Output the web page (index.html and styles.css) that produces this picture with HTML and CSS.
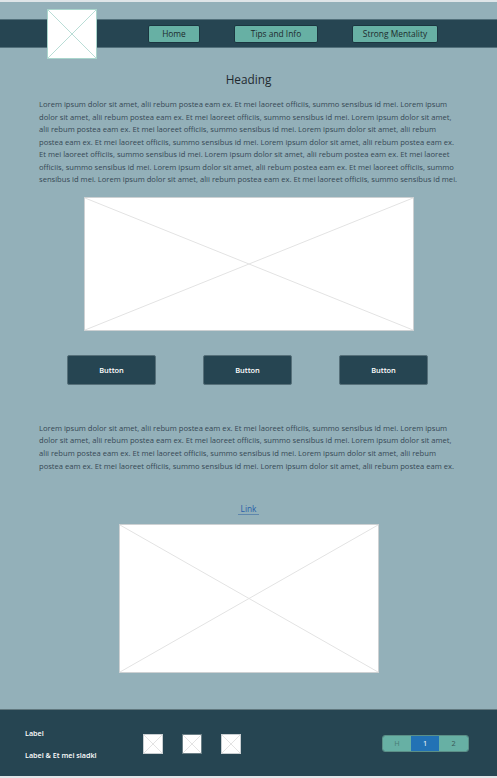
FILE: index.html
```html
<!DOCTYPE html>
<html lang="en">
<head>
<meta charset="utf-8">
<title>Strong Mentality</title>
<link rel="stylesheet" href="styles.css">
</head>
<body>
<div class="page">
  <header class="topbar">
    <div class="bar">
      <div class="logo">
        <svg class="ph-svg" viewBox="0 0 100 100" preserveAspectRatio="none"><line x1="0" y1="0" x2="100" y2="100"/><line x1="100" y1="0" x2="0" y2="100"/></svg>
      </div>
      <nav class="nav">
        <a class="nav-btn nav-home" href="#">Home</a>
        <a class="nav-btn nav-tips" href="#">Tips and Info</a>
        <a class="nav-btn nav-strong" href="#">Strong Mentality</a>
      </nav>
    </div>
  </header>

  <main class="content">
    <h1 class="heading">Heading</h1>
    <p class="text">Lorem ipsum dolor sit amet, alii rebum postea eam ex. Et mei laoreet officiis, summo sensibus id mei. Lorem ipsum dolor sit amet, alii rebum postea eam ex. Et mei laoreet officiis, summo sensibus id mei. Lorem ipsum dolor sit amet, alii rebum postea eam ex. Et mei laoreet officiis, summo sensibus id mei. Lorem ipsum dolor sit amet, alii rebum postea eam ex. Et mei laoreet officiis, summo sensibus id mei. Lorem ipsum dolor sit amet, alii rebum postea eam ex. Et mei laoreet officiis, summo sensibus id mei. Lorem ipsum dolor sit amet, alii rebum postea eam ex. Et mei laoreet officiis, summo sensibus id mei. Lorem ipsum dolor sit amet, alii rebum postea eam ex. Et mei laoreet officiis, summo sensibus id mei. Lorem ipsum dolor sit amet, alii rebum postea eam ex. Et mei laoreet officiis, summo sensibus id mei.</p>

    <div class="placeholder hero">
      <svg class="ph-svg" viewBox="0 0 100 100" preserveAspectRatio="none"><line x1="0" y1="0" x2="100" y2="100"/><line x1="100" y1="0" x2="0" y2="100"/></svg>
    </div>

    <div class="buttons">
      <button class="btn" type="button">Button</button>
      <button class="btn" type="button">Button</button>
      <button class="btn" type="button">Button</button>
    </div>

    <p class="text text-second">Lorem ipsum dolor sit amet, alii rebum postea eam ex. Et mei laoreet officiis, summo sensibus id mei. Lorem ipsum dolor sit amet, alii rebum postea eam ex. Et mei laoreet officiis, summo sensibus id mei. Lorem ipsum dolor sit amet, alii rebum postea eam ex. Et mei laoreet officiis, summo sensibus id mei. Lorem ipsum dolor sit amet, alii rebum postea eam ex. Et mei laoreet officiis, summo sensibus id mei. Lorem ipsum dolor sit amet, alii rebum postea eam ex.</p>

    <div class="link-row"><a class="link" href="#">Link</a></div>

    <div class="placeholder photo">
      <svg class="ph-svg" viewBox="0 0 100 100" preserveAspectRatio="none"><line x1="0" y1="0" x2="100" y2="100"/><line x1="100" y1="0" x2="0" y2="100"/></svg>
    </div>
  </main>

  <footer class="footer">
    <div class="labels">
      <span class="label">Label</span>
      <span class="label">Label &amp; Et mei sladkl</span>
    </div>
    <div class="thumbs">
      <div class="thumb"><svg class="ph-svg" viewBox="0 0 100 100" preserveAspectRatio="none"><line x1="0" y1="0" x2="100" y2="100"/><line x1="100" y1="0" x2="0" y2="100"/></svg></div>
      <div class="thumb thumb-dark"><svg class="ph-svg" viewBox="0 0 100 100" preserveAspectRatio="none"><line x1="0" y1="0" x2="100" y2="100"/><line x1="100" y1="0" x2="0" y2="100"/></svg></div>
      <div class="thumb"><svg class="ph-svg" viewBox="0 0 100 100" preserveAspectRatio="none"><line x1="0" y1="0" x2="100" y2="100"/><line x1="100" y1="0" x2="0" y2="100"/></svg></div>
    </div>
    <div class="pager">
      <span class="page-item page-h">H</span>
      <span class="page-item page-active">1</span>
      <span class="page-item page-2">2</span>
    </div>
  </footer>
</div>
</body>
</html>
```

FILE: styles.css
```css
* { box-sizing: border-box; }

html, body {
  margin: 0;
  padding: 0;
  background: #93b0b9;
}

body {
  font-family: "Open Sans", "Noto Sans", "DejaVu Sans", sans-serif;
}

.page {
  width: 497px;
  height: 778px;
  background: #93b0b9;
  border-top: 2px solid #dfe5e8;
  border-bottom: 2px solid #dfe5e8;
  display: flex;
  flex-direction: column;
  overflow: hidden;
}

/* header */
.topbar {
  padding-top: 17px;
}

.bar {
  height: 29px;
  background: #264552;
  border-top: 1px solid #52707b;
  border-bottom: 1px solid #52707b;
  display: flex;
  align-items: center;
}

.logo {
  width: 50px;
  height: 50px;
  flex: none;
  margin-left: 47px;
  background: #ffffff;
  border: 1px solid #a9d5cc;
}

.logo .ph-svg line { stroke: #b9ddd6; }

.nav {
  display: flex;
  align-items: center;
  gap: 34px;
  margin-left: 51px;
}

.nav-btn {
  display: flex;
  align-items: center;
  justify-content: center;
  height: 18px;
  background: #67b0a4;
  border: 1px solid #1b3540;
  border-radius: 2px;
  color: #1d2a2d;
  font-size: 8.4px;
  text-decoration: none;
}

.nav-home { width: 52px; }
.nav-tips { width: 84px; }
.nav-strong { width: 86px; }

/* placeholders */
.ph-svg {
  display: block;
  width: 100%;
  height: 100%;
}

.ph-svg line {
  stroke: #e3e3e3;
  stroke-width: 1;
  vector-effect: non-scaling-stroke;
}

.placeholder {
  background: #ffffff;
  border: 1px solid #cdd1d3;
  align-self: center;
}

.hero {
  width: 330px;
  height: 134px;
  margin-top: 11px;
}

.photo {
  width: 260px;
  height: 149px;
  margin-top: 9px;
}

/* content */
.content {
  flex: 1;
  display: flex;
  flex-direction: column;
}

.heading {
  margin: 23px 0 11px;
  text-align: center;
  font-size: 11.8px;
  line-height: 16px;
  font-weight: 400;
  color: #1f2a30;
}

.text {
  margin: 0;
  padding: 0 38px 0 39px;
  font-size: 7.62px;
  line-height: 12.5px;
  color: #364855;
}

.text-second {
  margin-top: 37px;
  line-height: 12.7px;
}

.buttons {
  display: flex;
  justify-content: center;
  gap: 47px;
  margin-top: 24px;
  padding-right: 2px;
}

.btn {
  width: 89px;
  height: 30px;
  background: #264552;
  border: 1px solid #56707a;
  border-radius: 2px;
  color: #ffffff;
  font-family: "Open Sans", "Noto Sans", sans-serif;
  font-size: 7.4px;
  font-weight: 600;
  padding: 0;
}

.link-row {
  margin-top: 31px;
  display: flex;
  justify-content: center;
  height: 12px;
}

.link {
  color: #2a5fa8;
  font-size: 8.3px;
  line-height: 11px;
  text-decoration: none;
  padding: 0 3px;
  border-bottom: 1px solid #5f87ac;
}

/* footer */
.footer {
  height: 67px;
  flex: none;
  background: #264552;
  border-top: 1px solid #61787f;
  display: flex;
  align-items: center;
  padding: 0 28px 0 25px;
}

.labels {
  display: flex;
  flex-direction: column;
  gap: 12px;
  padding-top: 2px;
  width: 74px;
}

.label {
  color: #ffffff;
  font-size: 7.2px;
  font-weight: 600;
  line-height: 10px;
  white-space: nowrap;
}

.thumbs {
  display: flex;
  gap: 19px;
  margin-left: 44px;
  padding-top: 1px;
}

.thumb {
  width: 20px;
  height: 20px;
  background: #ffffff;
  border: 1px solid #c9cfd2;
}

.thumb-dark { border-color: #6b7f86; }

.pager {
  margin-left: auto;
  display: flex;
  height: 17px;
  border: 1px solid #5b8f87;
  border-radius: 3px;
  overflow: hidden;
}

.page-item {
  display: flex;
  align-items: center;
  justify-content: center;
  width: 28px;
  background: #67b0a4;
  font-size: 7.4px;
  color: #4a7d77;
}

.page-active {
  background: #2272b5;
  color: #ffffff;
}

.page-2 {
  width: 29px;
  color: #3a5857;
}
```
